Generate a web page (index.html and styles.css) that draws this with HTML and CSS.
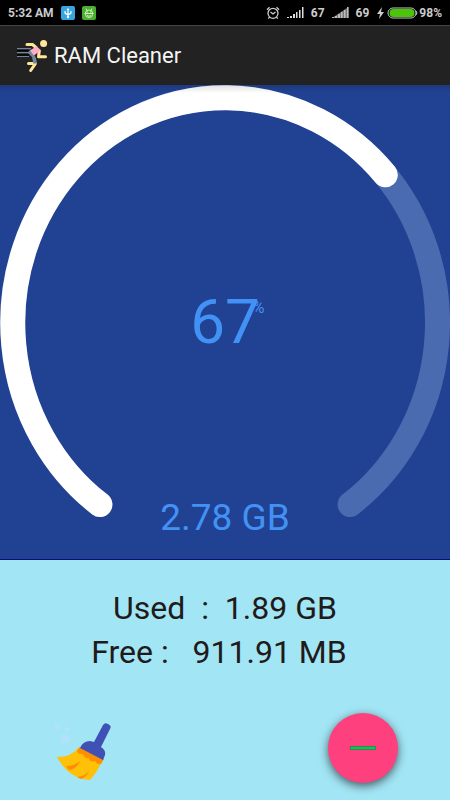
FILE: index.html
```html
<!DOCTYPE html>
<html lang="en">
<head>
<meta charset="utf-8">
<meta name="viewport" content="width=device-width, initial-scale=1">
<title>RAM Cleaner</title>
<link rel="stylesheet" href="styles.css">
</head>
<body>
<div class="status-bar">
  <div class="status-group">
    <span class="clock">5:32 AM</span>
    <svg class="badge" viewBox="0 0 14 14" aria-hidden="true">
      <rect width="14" height="14" rx="2" fill="#36a5e0"/>
      <path d="M7 3v8M4 5v1.500Q4 8 7 8.500Q10 8 10 6.500V5" fill="none" stroke="#fff" stroke-width="1.200"/>
      <path d="M5.500 4 7 2l1.500 2z" fill="#fff"/><circle cx="7" cy="11" r="1.200" fill="#fff"/>
    </svg>
    <svg class="badge" viewBox="0 0 14 14" aria-hidden="true">
      <rect width="14" height="14" rx="2" fill="#4caf2f"/>
      <path d="M4 2.500 5 4.500M10 2.500 9 4.500M3.500 7Q3.500 4 7 4T10.500 7V8.500Q10.500 11.500 7 11.500T3.500 8.500ZM2.500 7.500h9M5 9.500Q7 11 9 9.500" fill="none" stroke="#d9f5ce" stroke-width=".9"/>
      <path d="M5 5.500h1v1H5zM8 5.500h1v1H8z" fill="#d9f5ce"/>
    </svg>
  </div>
  <div class="status-group">
    <svg class="alarm" viewBox="0 0 14 14" aria-hidden="true">
      <g fill="none" stroke="#ccc" stroke-width="1.300"><circle cx="7" cy="7.300" r="5"/><path d="M1 3.800 3.500 1.300M13 3.800 10.500 1.300M4.500 6 7 8 9.500 6M3.500 11 2.300 12.700M10.500 11l1.200 1.700"/></g>
    </svg>
    <svg class="signal" viewBox="0 0 17 12" aria-hidden="true"><path d="M0 10h2v1H0zM3 9h2v2H3zM6 7h2v4H6zM9 5h1.500v6H9zM12 3h1.500v8H12zM15 0h1.500v11H15z" fill="#ddd"/></svg>
    <span class="level">67</span>
    <svg class="signal" viewBox="0 0 17 12" aria-hidden="true"><path d="M0 11 16.500 0V11z" fill="#777"/><path d="M0 10h2v1H0zM3 9h2v2H3zM6 7h2v4H6zM9 5h1.500v6H9zM12 3h1.500v8H12zM15 0h1.500v11H15z" fill="#bbb"/></svg>
    <span class="level">69</span>
    <svg class="battery" viewBox="0 0 42 12" aria-hidden="true">
      <path d="M6 0 1 7h3L3 12 8 5H5z" fill="#ccc"/>
      <rect x="12" y="1" width="28" height="10" rx="5" fill="#000" stroke="#c8c8c8"/>
      <path d="M40 4q2 2 0 4" fill="none" stroke="#c8c8c8"/>
      <rect x="13.500" y="2" width="25" height="8" rx="4" fill="#4bc40c"/>
    </svg>
    <span class="charge">98%</span>
  </div>
</div>

<header class="app-bar">
  <svg class="runner" viewBox="0 0 34 34" aria-hidden="true">
    <path d="M1 11.500h12M1 15.800h12" stroke="#050505" stroke-width="1.800"/>
    <path d="M1 9.700h14M1 13.600h12M1 17.500h12" stroke="#71869b" stroke-width="1.200"/>
    <g fill="none" stroke="#ffe79a" stroke-width="3" stroke-linejoin="round" stroke-linecap="round">
      <path d="M11 5.500h5.500L20 8.500M23.300 12l-.8 5.700h7M12.500 24.500H19.500L14.700 31.500"/>
    </g>
    <circle cx="27.600" cy="4.400" r="3.500" fill="#ffe79a"/>
    <path d="M13 11.500 12 14 16 18 17.300 24.500H21L20 19 17 14Z" fill="#71869b"/>
    <path d="M13.800 11.500 20.700 7.200 24.900 11.200 18 16.500Z" fill="#ffacc6"/>
  </svg>
  <h1 class="app-title">RAM Cleaner</h1>
</header>

<main class="screen">
  <section class="gauge" aria-label="Memory in use">
    <svg class="arc" viewBox="0 0 450 475" aria-hidden="true">
      <path class="arc-track" d="M99.900 419.500A212.500 225 0 1 1 350.100 419.500"/>
      <path class="arc-value" d="M99.900 419.500A212.500 225 0 1 1 385.300 89.800"/>
    </svg>
    <div class="percent">67<span class="percent-sign">%</span></div>
    <div class="total">2.78 GB</div>
  </section>
  <section class="details">
    <div class="stats">
      <p class="stat">Used  :  1.89 GB</p>
      <p class="stat stat-free">Free :   911.91 MB</p>
    </div>
    <div class="actions">
      <button class="clean" type="button" aria-label="Clean memory">
        <svg viewBox="0 0 60 60" aria-hidden="true">
          <g fill="#b0e2fb"><circle cx="5.500" cy="5.500" r="3"/><circle cx="15.500" cy="8" r="2.500"/><circle cx="13" cy="18" r="4.500"/></g>
          <path d="M5 36Q20 36 27 26L50 38Q48 48 38 59Q17 58 5 36Z" fill="#ffc107"/>
          <path d="M28 26 52 38 49 43Q45 44 43 40Q38 42 37 37Q32 38 31 33Q27 34 25 30ZM14 45Q22 45 28 40Q25 48 17 49ZM25 56Q33 55 37 50Q35 56 29 58Z" fill="#ff8f00"/>
          <path d="M28 27Q31 20 38 20L42 21 51 4Q53 1 56 3Q60 5 58 8L49 26Q54 29 53 34L51 39Z" fill="#3f51b5"/>
        </svg>
      </button>
      <button class="fab" type="button" aria-label="Stop"><span class="minus"></span></button>
    </div>
  </section>
</main>
</body>
</html>
```
FILE: styles.css
```css
* {
  box-sizing: border-box;
}

body {
  margin: 0;
  min-height: 100vh;
  display: flex;
  flex-direction: column;
  font-family: Roboto, "Liberation Sans", sans-serif;
  background: #a2e5f4;
}

.status-bar {
  display: flex;
  justify-content: space-between;
  align-items: center;
  height: 25px;
  padding: 0 8px;
  background: #000;
  color: #ccc;
  font-size: 12px;
  font-weight: 700;
}

.status-group {
  display: flex;
  align-items: center;
  gap: 7px;
}

.badge,
.alarm {
  width: 14px;
  height: 14px;
}

.signal {
  width: 17px;
  height: 12px;
}

.battery {
  width: 42px;
  height: 12px;
}

.charge {
  margin-left: -6px;
}

.app-bar {
  display: flex;
  align-items: center;
  gap: 4px;
  height: 60px;
  padding: 0 16px;
  background: #222;
  border-top: 1px solid #444;
}

.runner {
  width: 34px;
  height: 34px;
}

.app-title {
  margin: 0;
  color: #f5f5f5;
  font-size: 22px;
  font-weight: 400;
}

.screen {
  flex: 1;
  display: flex;
  flex-direction: column;
}

.gauge {
  position: relative;
  display: grid;
  justify-items: center;
  background: #214192;
  border-bottom: 1px solid #00107a;
  color: #4292f5;
}

.gauge::after {
  content: "";
  position: absolute;
  inset: 0 0 auto;
  height: 8px;
  background: linear-gradient(rgba(0, 0, 0, 0.12), rgba(0, 0, 0, 0));
}

.arc {
  display: block;
  width: 100%;
  margin-bottom: -1px;
}

.arc,
.percent,
.total {
  grid-area: 1 / 1;
}

.arc-track,
.arc-value {
  fill: none;
  stroke-width: 25px;
  stroke-linecap: round;
}

.arc-track {
  stroke: #4b6bb0;
}

.arc-value {
  stroke: #fff;
}

.percent {
  position: relative;
  align-self: center;
  font-size: 62px;
  line-height: 72px;
}

.percent-sign {
  position: absolute;
  top: 12px;
  left: 100%;
  margin-left: -7px;
  font-size: 16px;
  line-height: 20px;
}

.total {
  align-self: end;
  margin-bottom: 18px;
  font-size: 37px;
  line-height: 46px;
}

.details {
  flex: 1;
  display: flex;
  flex-direction: column;
  justify-content: space-between;
  padding: 26px 52px 17px;
}

.stat {
  margin: 0;
  color: #211a1a;
  font-size: 32px;
  line-height: 44px;
  text-align: center;
  white-space: pre;
}

.stat-free {
  padding-right: 12px;
}

.actions {
  display: flex;
  justify-content: space-between;
  align-items: flex-end;
}

.clean,
.fab {
  padding: 0;
  border: 0;
  cursor: pointer;
}

.clean {
  width: 60px;
  height: 62px;
  padding-bottom: 2px;
  background: none;
}

.clean svg {
  display: block;
}

.fab {
  display: grid;
  place-items: center;
  width: 70px;
  height: 70px;
  border-radius: 50%;
  background: #ff407f;
  box-shadow: 0 3px 10px rgba(0, 0, 0, 0.6);
}

.minus {
  width: 26px;
  height: 4px;
  background: #2fb457;
  border: 1px solid #159a50;
}
```
